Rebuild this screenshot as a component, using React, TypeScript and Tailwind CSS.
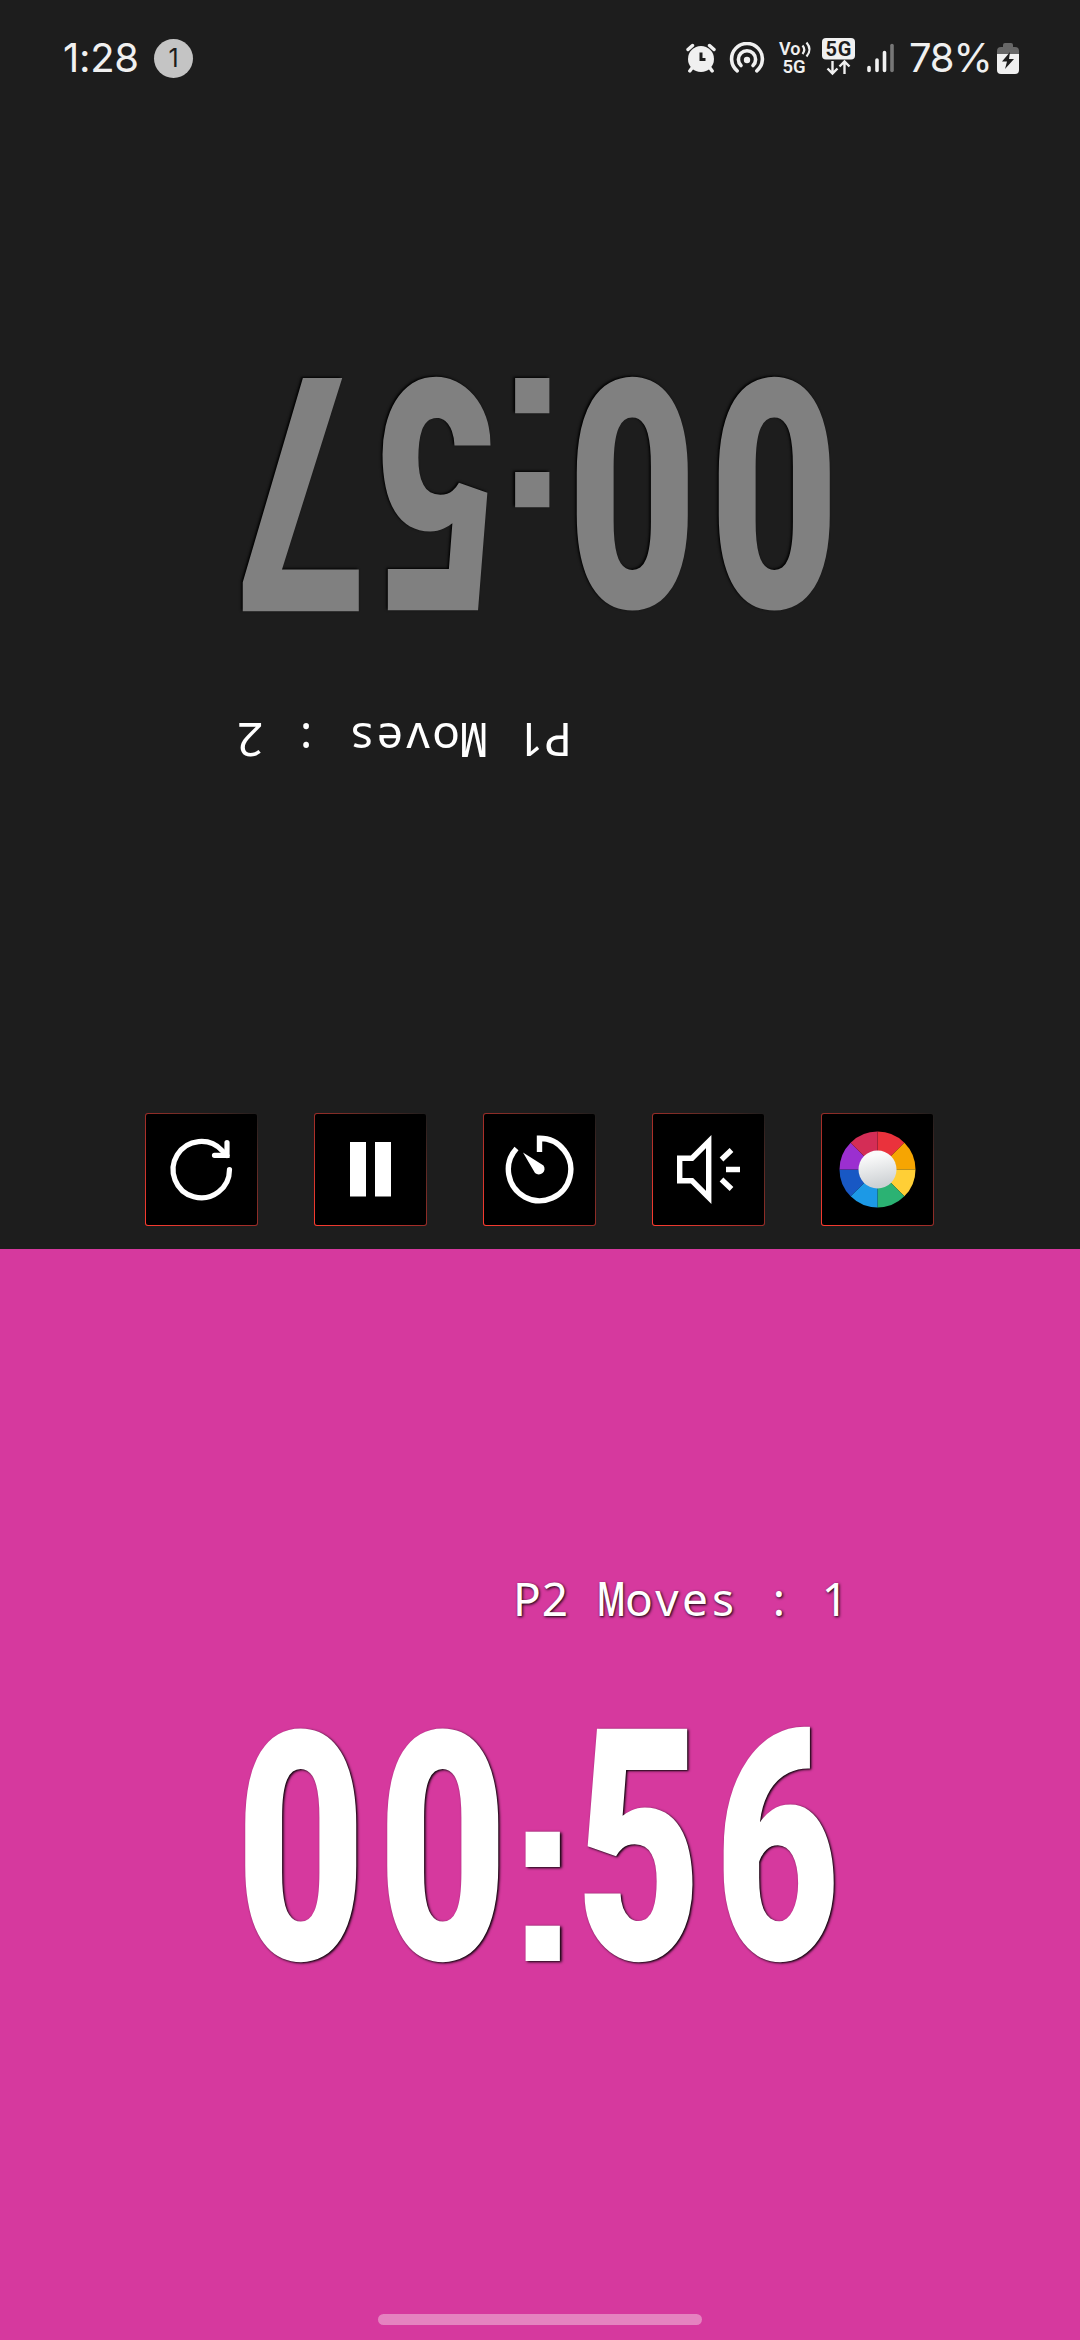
import type { ReactNode } from "react";

type Glyph = { ch: string; box: string; glyph: string };

const TOP_CLOCK: Glyph[] = [
  { ch: "0", box: "w-[113px]", glyph: "font-['Roboto'] font-black text-[320px] scale-x-[0.7] -translate-y-[2px]" },
  { ch: "0", box: "w-[113px] ml-[29px]", glyph: "font-['Roboto'] font-black text-[320px] scale-x-[0.7] -translate-y-[2px]" },
  { ch: ":", box: "w-[34px] ml-[27px]", glyph: "font-['Liberation_Sans'] font-bold text-[256px] scale-x-[0.95]" },
  { ch: "5", box: "w-[109px] ml-[24px]", glyph: "font-['Roboto'] font-black text-[324px] scale-x-[0.67] -translate-y-[2px]" },
  { ch: "7", box: "w-[117px] ml-[25px]", glyph: "font-['Roboto'] font-black text-[328px] scale-x-[0.69]" },
];

const BOTTOM_CLOCK: Glyph[] = [
  { ch: "0", box: "w-[113px]", glyph: "font-['Roboto'] font-black text-[320px] scale-x-[0.7] -translate-y-[2px]" },
  { ch: "0", box: "w-[113px] ml-[29px]", glyph: "font-['Roboto'] font-black text-[320px] scale-x-[0.7] -translate-y-[2px]" },
  { ch: ":", box: "w-[34px] ml-[27px]", glyph: "font-['Liberation_Sans'] font-bold text-[256px] scale-x-[0.95]" },
  { ch: "5", box: "w-[109px] ml-[24px]", glyph: "font-['Roboto'] font-black text-[324px] scale-x-[0.67] -translate-y-[2px]" },
  { ch: "6", box: "w-[111px] ml-[29px]", glyph: "font-['Roboto'] font-black text-[322px] scale-x-[0.67] -translate-y-[2px]" },
];

function Clock({ glyphs, className }: { glyphs: Glyph[]; className: string }) {
  return (
    <div className={`flex h-[233px] items-end whitespace-nowrap ${className}`}>
      {glyphs.map((g, i) => (
        <span key={i} className={`flex h-full items-baseline justify-center ${g.box}`}>
          <span className="inline-block h-[233px] w-0" />
          <span className={`shrink-0 leading-[0] ${g.glyph}`}>{g.ch}</span>
        </span>
      ))}
    </div>
  );
}

function Moves({ text, className }: { text: string; className: string }) {
  return (
    <div className={`flex h-[64px] items-center whitespace-pre font-['Noto_Sans'] text-[46px] leading-[64px] text-white ${className}`}>
      {text.split("").map((c, i) => (
        <span key={i} className="flex w-[28px] justify-center">
          <span className={c === "M" ? "inline-block scale-x-[0.68] font-semibold" : "inline-block"}>{c}</span>
        </span>
      ))}
    </div>
  );
}

function ControlButton({ children }: { children: ReactNode }) {
  return (
    <button className="h-[113px] w-[113px] rounded-[3px] bg-linear-to-tr from-[#ff3b2f] via-[#9a2c27] to-[#1d1d1d] p-px">
      <span className="block h-full w-full rounded-[2px] bg-black">{children}</span>
    </button>
  );
}

const WHEEL = [
  ["#ea323c", 0], ["#f6a502", 45], ["#ffcf36", 90], ["#2bb273", 135],
  ["#1c99e6", 180], ["#1858c4", 225], ["#9b2fd0", 270], ["#d42d56", 315],
] as const;

function sector(start: number) {
  const p = (deg: number) => {
    const r = (deg * Math.PI) / 180;
    return `${55.5 + 38 * Math.sin(r)} ${55.5 - 38 * Math.cos(r)}`;
  };
  return `M55.5 55.5L${p(start)}A38 38 0 0 1 ${p(start + 45)}Z`;
}

function StatusBar() {
  return (
    <header className="flex h-[116px] items-center pl-[63px] pr-[61px] text-[#f0f0f0]">
      <span className="w-[78px] whitespace-nowrap font-['Inter'] text-[40px] leading-none tracking-[-0.3px]">1:28</span>
      <span className="ml-[13px] flex h-[39px] w-[39px] items-center justify-center rounded-full bg-[#c4c4c4] font-['Inter'] text-[25px] leading-none text-[#1d1d1d]">1</span>
      <svg className="ml-auto" width="30" height="30" viewBox="0 0 30 30" fill="none" stroke="#f0f0f0" strokeWidth="3.4" strokeLinecap="round">
        <circle cx="15" cy="16" r="13" fill="#f0f0f0" stroke="none" />
        <path d="M2 6.5L6.500 2.500M28 6.500L23.500 2.500M6 25L3.800 28M24 25L26.200 28" />
        <path d="M15 9.500V16.500H19.500" stroke="#1d1d1d" strokeWidth="3" strokeLinecap="butt" />
      </svg>
      <svg className="ml-[13px]" width="36" height="32" viewBox="0 0 36 32" fill="none" stroke="#f0f0f0" strokeWidth="3.6" strokeLinecap="round">
        <path d="M8.200 28.800A15.400 15.400 0 1 1 27.800 28.800" />
        <path d="M12 23.500A8.600 8.600 0 1 1 24 23.500" />
        <circle cx="18" cy="18" r="3.200" fill="#f0f0f0" stroke="none" />
      </svg>
      <svg className="ml-[12px] overflow-visible" width="36" height="46" viewBox="-2 -6 36 46" fill="none">
        <text x="0" y="14" fill="#f0f0f0" fontFamily="Roboto" fontWeight="600" fontSize="18">Vo</text>
        <text x="3.500" y="31.500" fill="#f0f0f0" fontFamily="Roboto" fontWeight="600" fontSize="18.500">5G</text>
        <path d="M23.500 4.500Q27 8.500 23.500 13M27.500 1.500Q33.500 8.500 27.500 15.500" stroke="#f0f0f0" strokeWidth="2.200" />
      </svg>
      <svg className="-mt-[3px] ml-[9px]" width="33" height="38" viewBox="0 0 33 38" fill="none">
        <rect x="0" y="0" width="33" height="21.500" rx="4" fill="#f0f0f0" />
        <text x="3.500" y="17.800" fill="#1d1d1d" fontFamily="Roboto" fontWeight="700" fontSize="20" textLength="26">5G</text>
        <path d="M10.500 23V35M5.500 30.500L10.500 35.500L15.500 30.500M22.500 36V24M17.500 28.500L22.500 23.500L27.500 28.500" stroke="#f0f0f0" strokeWidth="2.400" />
      </svg>
      <svg className="ml-[12px]" width="28" height="30" viewBox="0 0 28 30" strokeWidth="3.600" strokeLinecap="round" stroke="#f0f0f0">
        <path d="M2 24.500V27.500M10 17V27.500M17.500 9.500V27.500" />
        <path d="M25 2.500V27.500" stroke="#777777" />
      </svg>
      <span className="ml-[14px] w-[82px] whitespace-nowrap font-['Inter'] text-[40px] leading-none tracking-[-1.200px]">78%</span>
      <svg className="ml-[6px]" width="22" height="31" viewBox="0 0 22 31">
        <path d="M0 11V8Q0 4 4 4H6V2Q6 0 8 0H14Q16 0 16 2V4H18Q22 4 22 8V11Z" fill="#676767" />
        <path d="M0 11H22V27Q22 31 18 31H4Q0 31 0 27Z" fill="#f0f0f0" />
        <path d="M13 9L5 18.500H10L8 26L17 16H12Z" fill="#1d1d1d" />
      </svg>
    </header>
  );
}

export default function App() {
  return (
    <main className="flex h-[2340px] w-[1080px] flex-col overflow-hidden bg-[#1d1d1d]">
      <section className="flex h-[1249px] flex-col">
        <StatusBar />
        <div className="mt-[262px] flex h-[395px] rotate-180 flex-col justify-end">
          <Moves text="P1 Moves : 2" className="mb-[98px] ml-[508px]" />
          <Clock glyphs={TOP_CLOCK} className="ml-[249px] text-[#808080] [text-shadow:2px_1px_3px_#000]" />
        </div>
        <nav className="mt-auto mb-[23px] ml-[145px] flex gap-[56px]">
          <ControlButton>
            <svg width="111" height="111" viewBox="0 0 111 111" fill="none" stroke="white" strokeWidth="5.200" strokeLinecap="round">
              <path d="M83.500 55.500A28.200 28.200 0 1 1 76 36.500L81 41.500" />
              <path d="M81 28.500V41.300H68.500" />
            </svg>
          </ControlButton>
          <ControlButton>
            <svg width="111" height="111" viewBox="0 0 111 111" fill="white">
              <rect x="35" y="28" width="16" height="54.500" /><rect x="60" y="28" width="16" height="54.500" />
            </svg>
          </ControlButton>
          <ControlButton>
            <svg width="111" height="111" viewBox="0 0 111 111" fill="none" stroke="white" strokeWidth="5.400">
              <path d="M55.500 38V24.300A31.200 31.200 0 1 1 32.500 34.500" />
              <path d="M39 38.500L59.500 51.500A5.700 5.700 0 0 1 51 59Z" fill="white" stroke="none" />
            </svg>
          </ControlButton>
          <ControlButton>
            <svg width="111" height="111" viewBox="0 0 111 111" fill="none" stroke="white" strokeWidth="5.400">
              <path d="M26.700 44.200H39L55.700 27.500V83.500L39 66.800H26.700Z" />
              <path d="M68.500 45.500L78.500 36M73 55.500H87M68.500 65.500L78.500 75" />
            </svg>
          </ControlButton>
          <ControlButton>
            <svg width="111" height="111" viewBox="0 0 111 111">
              <defs>
                <linearGradient id="hub" x1="0" y1="0" x2="0.200" y2="1">
                  <stop offset="0.200" stopColor="#fafafa" /><stop offset="1" stopColor="#cdd1d4" />
                </linearGradient>
              </defs>
              {WHEEL.map(([color, start]) => <path key={start} d={sector(start)} fill={color} />)}
              <circle cx="55.500" cy="55.500" r="19" fill="url(#hub)" />
            </svg>
          </ControlButton>
        </nav>
      </section>
      <section className="flex flex-1 flex-col bg-[#d6399e]">
        <Moves text="P2 Moves : 1" className="mt-[317px] ml-[513px] [text-shadow:1px_1px_3px_#000]" />
        <Clock glyphs={BOTTOM_CLOCK} className="mt-[98px] ml-[244px] text-white [text-shadow:2px_1px_3px_#000]" />
        <div className="mx-auto mt-auto mb-[15px] h-[11px] w-[324px] rounded-full bg-[#e583c0]" />
      </section>
    </main>
  );
}
